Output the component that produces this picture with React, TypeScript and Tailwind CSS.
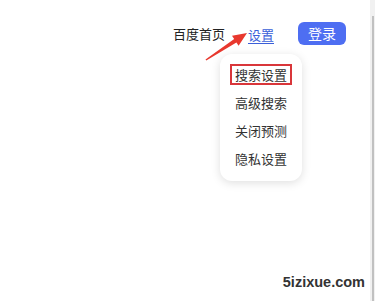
import React from 'react';

const menuItems = ['搜索设置', '高级搜索', '关闭预测', '隐私设置'];

const cjk = { fontFamily: '"Noto Sans CJK SC", "Noto Sans", sans-serif' };

export default function App() {
  return (
    <div className="flex h-[301px] w-[375px] overflow-hidden bg-white" style={cjk}>
      <div className="relative flex flex-1 flex-col">
        <header className="flex items-center justify-end pt-[21px] pr-[24px]">
          <a className="text-[13px] leading-[23px] text-[#222]">百度首页</a>
          <div className="relative ml-[23px]">
            <a className="text-[13px] leading-[23px] text-[#3b5fd9] underline decoration-[#3b5fd9] underline-offset-[3px]">
              设置
            </a>
            {/* dropdown */}
            <div className="absolute left-[-28px] top-[33px] z-10 flex w-[82px] flex-col items-center rounded-[12px] bg-white pt-[6px] pb-[9px] shadow-[0_2px_10px_rgba(0,0,0,0.13)]">
              {menuItems.map((item, i) => (
                <div key={item} className="flex h-[28px] items-center justify-center">
                  <span
                    className={
                      i === 0
                        ? 'border-2 border-[#d9363a] px-[3px] text-[13px] leading-[17px] text-[#333]'
                        : 'text-[13px] leading-[17px] text-[#333]'
                    }
                  >
                    {item}
                  </span>
                </div>
              ))}
            </div>
          </div>
          <button className="ml-[24px] h-[23px] w-[48px] rounded-[6px] bg-[#4e6ef2] text-[14px] leading-[23px] text-white">
            登录
          </button>
        </header>

        {/* annotation arrow */}
        <svg className="pointer-events-none absolute left-0 top-0 z-20" width="370" height="301">
          <polygon
            points="247,33 238.6,45.7 236.4,42.4 206.3,60.6 205.5,59.4 234.2,39 232,35.7"
            fill="#e8382e"
          />
        </svg>

        <div className="mt-auto flex justify-end pr-[5px] pb-[9px]">
          <span
            className="text-[14.5px] font-bold leading-[20px] text-[#333]"
            style={{ fontFamily: '"Liberation Sans", Arial, sans-serif' }}
          >
            5izixue.com
          </span>
        </div>
      </div>

      {/* scrollbar */}
      <div className="flex w-[5px] flex-col bg-[#f1f1f1] pt-[16px]">
        <div className="ml-[2px] w-[2px] flex-1 bg-[#c1c1c1]" />
      </div>
    </div>
  );
}
